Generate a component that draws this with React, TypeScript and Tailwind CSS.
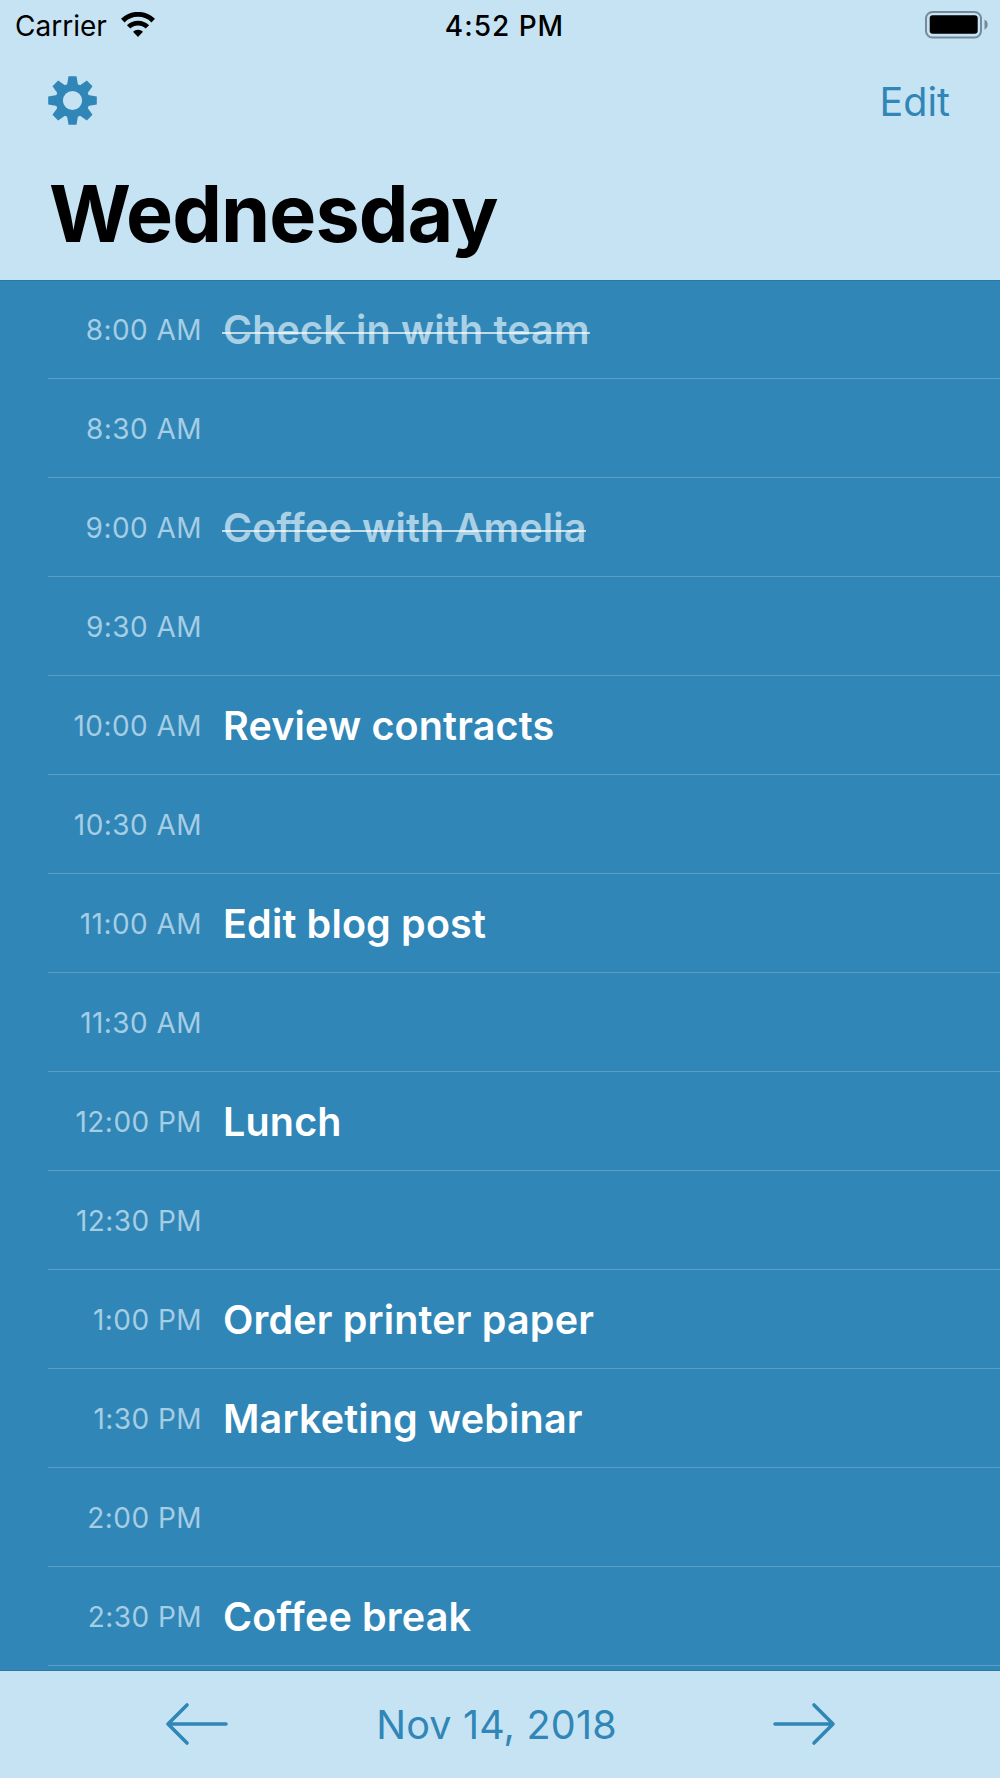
import * as React from 'react';
import { clsx } from 'clsx';

interface Slot {
  time: string;
  title?: string;
  done?: boolean;
}

const slots: Slot[] = [
  { time: '8:00 AM', title: 'Check in with team', done: true },
  { time: '8:30 AM' },
  { time: '9:00 AM', title: 'Coffee with Amelia', done: true },
  { time: '9:30 AM' },
  { time: '10:00 AM', title: 'Review contracts' },
  { time: '10:30 AM' },
  { time: '11:00 AM', title: 'Edit blog post' },
  { time: '11:30 AM' },
  { time: '12:00 PM', title: 'Lunch' },
  { time: '12:30 PM' },
  { time: '1:00 PM', title: 'Order printer paper' },
  { time: '1:30 PM', title: 'Marketing webinar' },
  { time: '2:00 PM' },
  { time: '2:30 PM', title: 'Coffee break' },
];

export default function App() {
  return (
    <div className="flex h-[1778px] w-[1000px] flex-col overflow-hidden bg-[#3086b6] font-['Inter',sans-serif]">
      <header className="h-[280px] shrink-0 bg-[#c6e3f4]">
        <StatusBar />
        <div className="flex h-[100px] items-center justify-between pl-12 pr-[50px]">
          <button aria-label="Settings">
            <GearIcon />
          </button>
          <button className="pt-[5px] text-[39.5px] leading-none text-[#3086b6]">Edit</button>
        </div>
        <h1 className="mt-[13px] pl-[49px] text-[79px] font-bold leading-[100px] tracking-[-0.012em] text-black">
          Wednesday
        </h1>
      </header>

      <main className="min-h-0 flex-1 overflow-hidden border-y border-[#2c78a3]">
        <div className="-mt-px">
          {slots.map((slot) => (
            <SlotRow key={slot.time} slot={slot} />
          ))}
        </div>
      </main>

      <footer className="flex h-[107px] shrink-0 items-center justify-between bg-[#c6e3f4] pb-px pl-[165px] pr-[164px] text-[#3086b6]">
        <button aria-label="Previous day">
          <ArrowIcon />
        </button>
        <span className="pr-[8px] pt-[3px] text-[39.5px] leading-none tracking-[0.005em]">Nov 14, 2018</span>
        <button aria-label="Next day">
          <ArrowIcon className="rotate-180" />
        </button>
      </footer>
    </div>
  );
}

function StatusBar() {
  return (
    <div className="grid h-[50px] grid-cols-3 items-center pl-[15px] pr-[12px] text-[28px] leading-none text-black">
      <div className="flex items-center gap-3.5">
        <span className="pt-0.5">Carrier</span>
        <WifiIcon />
      </div>
      <span className="pl-[6px] pt-0.5 text-center font-medium tracking-[0.035em]">4:52 PM</span>
      <div className="flex justify-end">
        <BatteryIcon />
      </div>
    </div>
  );
}

function SlotRow({ slot }: { slot: Slot }) {
  return (
    <div className="ml-12 flex h-[99px] items-center border-b border-[#5b9fc6]">
      <span className="w-[154px] pt-px text-right text-[28px] leading-none tracking-[0.016em] text-[#a5cde4]">
        {slot.time}
      </span>
      {slot.title && (
        <span
          className={clsx(
            'relative ml-[21px] pt-[3px] text-[39.5px] font-semibold leading-none tracking-[0.004em]',
            slot.done
              ? "text-[#a9d0e5] after:absolute after:-left-px after:right-0 after:top-[24.5px] after:h-0.5 after:bg-white/70 after:content-['']"
              : 'text-white'
          )}
        >
          {slot.title}
        </span>
      )}
    </div>
  );
}

function GearIcon() {
  return (
    <svg width="49" height="49" viewBox="-24.5 -24.5 49 49" fill="#3086b6">
      {[0, 45, 90, 135, 180, 225, 270, 315].map((angle) => (
        <path key={angle} d="M-4 -24.3H4L5.7 -14H-5.7Z" transform={`rotate(${angle})`} />
      ))}
      <circle r="13.3" fill="none" stroke="#3086b6" strokeWidth="7.4" />
    </svg>
  );
}

function WifiIcon() {
  return (
    <svg className="-mt-px" width="34" height="26" viewBox="0 0 34 26" fill="none" stroke="#000">
      <path d="M1.8 8.6A21.6 21.6 0 0 1 32.2 8.6" strokeWidth="5" />
      <path d="M7.6 14.9A13.4 13.4 0 0 1 26.4 14.9" strokeWidth="4.8" />
      <path d="M12 19.8A7.2 7.2 0 0 1 22 19.8L17 25Z" fill="#000" stroke="none" />
    </svg>
  );
}

function BatteryIcon() {
  return (
    <svg className="-mt-px" width="63" height="28" viewBox="0 0 63 28">
      <rect x="1" y="1" width="55" height="25.5" rx="6.5" fill="none" stroke="#75899a" strokeWidth="2" />
      <rect x="4.7" y="4.2" width="48" height="18.6" rx="3" fill="#000" />
      <path d="M59.5 8.5V18.7A5.7 5.7 0 0 0 59.5 8.5Z" fill="#75899a" />
    </svg>
  );
}

function ArrowIcon({ className }: { className?: string }) {
  return (
    <svg
      className={className}
      width="64"
      height="44"
      viewBox="0 0 64 44"
      fill="none"
      stroke="currentColor"
      strokeWidth="3.6"
      strokeLinecap="round"
      strokeLinejoin="round"
    >
      <path d="M22 3L3 22L22 41M3 22H61" />
    </svg>
  );
}
